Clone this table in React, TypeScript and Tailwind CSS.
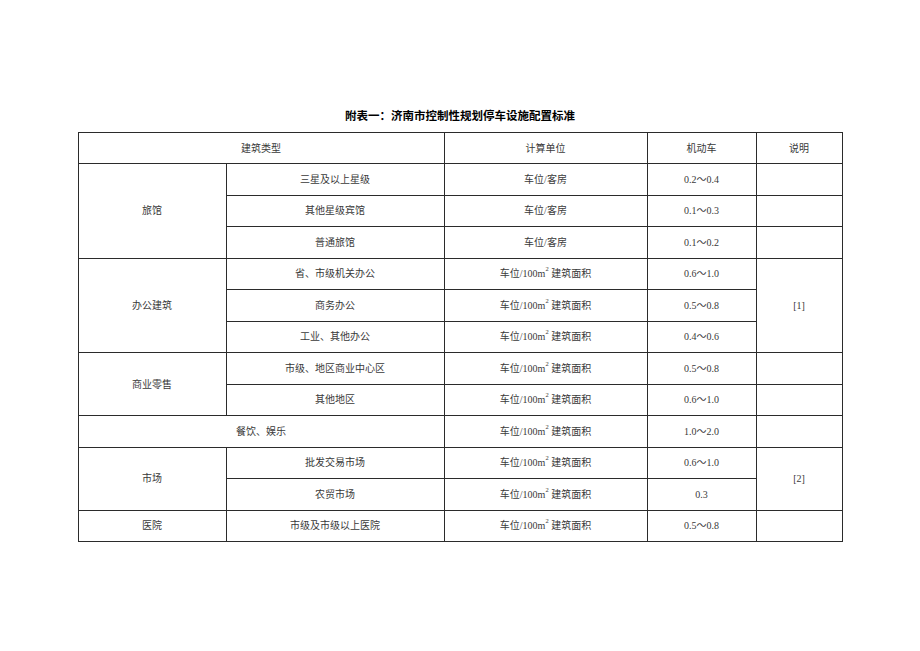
import React from "react";

type Row = {
  group?: { text: string; span: number };
  wide?: string;
  sub?: string;
  unit: string;
  value: string;
  note?: { text: string; span: number } | null;
};

const AREA = "area";

const rows: Row[] = [
  { group: { text: "旅馆", span: 3 }, sub: "三星及以上星级", unit: "车位/客房", value: "0.2～0.4", note: { text: "", span: 1 } },
  { sub: "其他星级宾馆", unit: "车位/客房", value: "0.1～0.3", note: { text: "", span: 1 } },
  { sub: "普通旅馆", unit: "车位/客房", value: "0.1～0.2", note: { text: "", span: 1 } },
  { group: { text: "办公建筑", span: 3 }, sub: "省、市级机关办公", unit: AREA, value: "0.6～1.0", note: { text: "[1]", span: 3 } },
  { sub: "商务办公", unit: AREA, value: "0.5～0.8", note: null },
  { sub: "工业、其他办公", unit: AREA, value: "0.4～0.6", note: null },
  { group: { text: "商业零售", span: 2 }, sub: "市级、地区商业中心区", unit: AREA, value: "0.5～0.8", note: { text: "", span: 1 } },
  { sub: "其他地区", unit: AREA, value: "0.6～1.0", note: { text: "", span: 1 } },
  { wide: "餐饮、娱乐", unit: AREA, value: "1.0～2.0", note: { text: "", span: 1 } },
  { group: { text: "市场", span: 2 }, sub: "批发交易市场", unit: AREA, value: "0.6～1.0", note: { text: "[2]", span: 2 } },
  { sub: "农贸市场", unit: AREA, value: "0.3", note: null },
  { group: { text: "医院", span: 1 }, sub: "市级及市级以上医院", unit: AREA, value: "0.5～0.8", note: { text: "", span: 1 } },
];

const cell = "border border-[#2b2b2b] text-center align-middle p-0";

function Unit({ unit }: { unit: string }) {
  if (unit !== AREA) return <>{unit}</>;
  return (
    <>
      车位/100m<sup className="text-[6.5px] align-[3px]">2</sup> 建筑面积
    </>
  );
}

export default function App() {
  return (
    <div className="min-h-[651px] w-[920px] bg-white pt-[107px]">
      <h1 className="text-center text-[11.5px] leading-[17px] font-bold text-black [font-family:'Noto_Sans_CJK_SC',sans-serif]">
        附表一：济南市控制性规划停车设施配置标准
      </h1>
      <table className="mx-auto mt-[8px] w-[764px] table-fixed border-collapse text-[10px] text-[#3a3a3a] [font-family:'Liberation_Serif','Noto_Sans_CJK_SC',serif]">
        <colgroup>
          <col className="w-[148px]" />
          <col className="w-[218px]" />
          <col className="w-[203px]" />
          <col className="w-[109px]" />
          <col className="w-[86px]" />
        </colgroup>
        <tbody>
          <tr className="h-[31px]">
            <td className={cell} colSpan={2}>建筑类型</td>
            <td className={cell}>计算单位</td>
            <td className={cell}>机动车</td>
            <td className={cell}>说明</td>
          </tr>
          {rows.map((r, i) => (
            <tr key={i} className="h-[31.5px]">
              {r.wide ? (
                <td className={cell} colSpan={2}>{r.wide}</td>
              ) : (
                <>
                  {r.group && (
                    <td className={cell} rowSpan={r.group.span}>{r.group.text}</td>
                  )}
                  <td className={cell}>{r.sub}</td>
                </>
              )}
              <td className={cell}>
                <Unit unit={r.unit} />
              </td>
              <td className={cell}>{r.value}</td>
              {r.note && (
                <td className={cell} rowSpan={r.note.span}>{r.note.text}</td>
              )}
            </tr>
          ))}
        </tbody>
      </table>
    </div>
  );
}
